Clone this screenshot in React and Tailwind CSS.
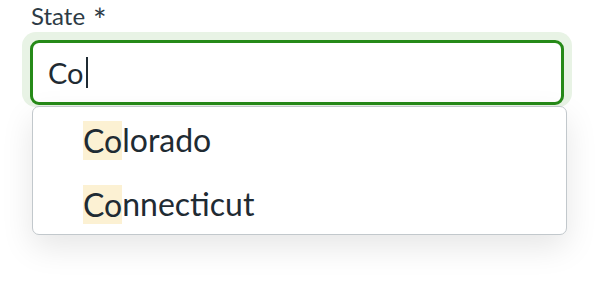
export default function App() {
  return (
    <div className="w-[600px] h-[293px] bg-white overflow-hidden relative" style={{ fontFamily: 'Lato, "Noto Sans", sans-serif' }}>
      <div className="pl-[31px] pt-[3px] h-[32px] flex items-start text-[24px] leading-[26px] text-[#2d3b45]">
        <span>State</span>
        <span className="ml-[8px] mt-[5px] text-[32px] leading-[24px]">*</span>
      </div>
      <div className="ml-[22px] w-[550px] rounded-[14px] bg-[#e8f3e5] p-[8px] pb-[2px]">
        <div className="h-[65px] rounded-[9px] border-[3px] border-[#268a18] bg-white flex items-center pl-[15px] text-[29px] text-[#1f2b33]">
          <span>Co</span>
          <span className="ml-[2px] w-[2px] h-[31px] bg-[#1f2b33]" />
        </div>
      </div>
      <div className="absolute left-[32px] top-[106px] w-[535px] h-[129px] rounded-[7px] border border-[#c2c8cc] bg-white shadow-[0_12px_32px_rgba(0,0,0,0.10)] py-[1px]">
        {["Colorado", "Connecticut"].map((s) => (
          <div key={s} className="h-[64px] flex items-center pl-[50px] text-[32px] text-[#1f2b33]">
            <span className="bg-[#fcf1d3] leading-[39px]">Co</span>
            <span>{s.slice(2)}</span>
          </div>
        ))}
      </div>
    </div>
  );
}
